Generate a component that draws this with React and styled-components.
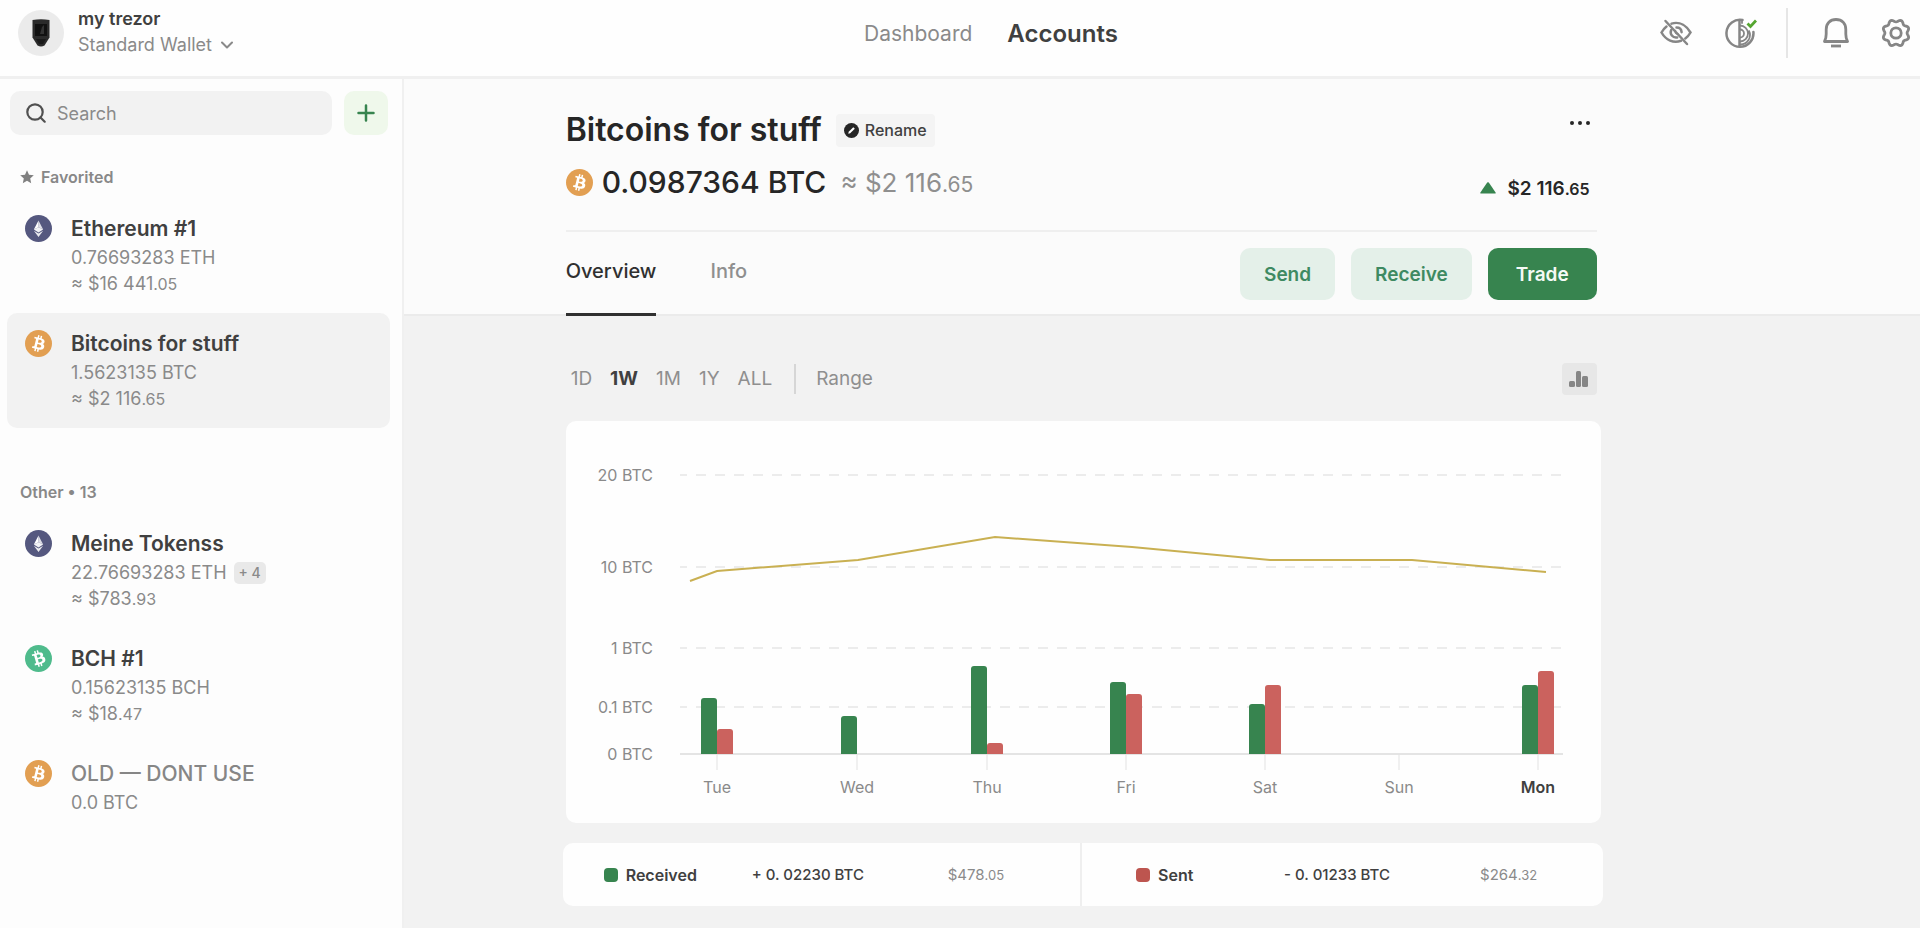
import React from "react";
import styled, { createGlobalStyle, css } from "styled-components";

const GlobalStyle = createGlobalStyle`
  * {
    box-sizing: border-box;
  }

  body {
    margin: 0;
    background: #f2f2f2;
    color: #404040;
    font-family: Inter, "Liberation Sans", sans-serif;
    font-size: 18px;
  }

  button, input {
    font: inherit;
    color: inherit;
  }

  button {
    border: 0;
    padding: 0;
    background: none;
    cursor: pointer;
  }

  svg {
    display: block;
    flex: none;
  }
`;

const Page = styled.div`
  min-height: 100vh;
  display: flex;
  flex-direction: column;
`;

/* Header */

const Header = styled.header`
  height: 79px;
  padding: 0 9px 10px 18px;
  display: grid;
  grid-template-columns: 16fr auto 15fr;
  align-items: center;
  background: #fefefe;
  border-bottom: 3px solid #f0f0f0;
`;

const WalletSwitcher = styled.button`
  display: flex;
  align-items: center;
  gap: 14px;
  text-align: left;
`;

const Avatar = styled.span`
  width: 46px;
  height: 46px;
  border-radius: 50%;
  background: #ebebeb;
  display: flex;
  align-items: center;
  justify-content: center;
`;

const WalletLabel = styled.span`
  padding-bottom: 3px;
`;

const WalletName = styled.span`
  display: block;
  font-weight: 600;
  line-height: 26px;
`;

const WalletType = styled.span`
  display: flex;
  align-items: center;
  gap: 9px;
  color: #8a8a8a;
  line-height: 26px;
`;

const Nav = styled.nav`
  display: flex;
  align-items: center;
  gap: 35px;
`;

const NavLink = styled.a`
  color: ${(props) => (props.$active ? "#404040" : "#8a8a8a")};
  font-size: ${(props) => (props.$active ? "24px" : "21px")};
  font-weight: ${(props) => (props.$active ? 600 : 400)};
  text-decoration: none;
`;

const HeaderActions = styled.div`
  display: flex;
  align-items: center;
  justify-content: flex-end;
  gap: 32px;
  color: #868686;
`;

const HeaderDivider = styled.span`
  width: 2px;
  height: 50px;
  margin: 0 3px 0 -3px;
  background: #e6e6e6;
`;

/* Sidebar */

const Body = styled.div`
  flex: 1;
  display: flex;
`;

const Sidebar = styled.aside`
  flex: none;
  width: 404px;
  padding: 12px 12px 0 7px;
  background: #fdfdfd;
  border-right: 2px solid #f0f0f0;
`;

const SearchRow = styled.div`
  display: flex;
  gap: 12px;
  padding: 0 2px 0 3px;
`;

const SearchBox = styled.label`
  flex: 1;
  min-width: 0;
  height: 44px;
  padding: 0 16px;
  display: flex;
  align-items: center;
  gap: 11px;
  border-radius: 10px;
  background: #f2f2f2;
`;

const SearchInput = styled.input`
  flex: 1;
  min-width: 0;
  padding: 0;
  border: 0;
  outline: 0;
  background: none;

  &::placeholder {
    color: #8a8a8a;
    opacity: 1;
  }
`;

const AddButton = styled.button`
  flex: none;
  width: 44px;
  height: 44px;
  border-radius: 10px;
  background: #eff8eb;
  color: #37844f;
  display: flex;
  align-items: center;
  justify-content: center;
`;

const GroupTitle = styled.h2`
  margin: 32px 0 11px;
  padding-left: 13px;
  display: flex;
  align-items: center;
  gap: 7px;
  color: #888;
  font-size: 16px;
  font-weight: 600;
  line-height: 20px;
`;

const AccountList = styled.ul`
  list-style: none;
  margin: 0 0 54px;
  padding: 0;
`;

const AccountButton = styled.button`
  width: 100%;
  min-height: 115px;
  padding: 17px 18px 15px;
  display: flex;
  align-items: flex-start;
  gap: 19px;
  border-radius: 10px;
  background: ${(props) => (props.$active ? "#f2f2f2" : "transparent")};
  text-align: left;
`;

const AccountName = styled.span`
  display: block;
  color: ${(props) => (props.$muted ? "#868686" : "#404040")};
  font-size: 21px;
  font-weight: ${(props) => (props.$muted ? 500 : 600)};
  line-height: 28px;
  margin-bottom: 2px;
`;

const AccountAmount = styled.span`
  display: flex;
  align-items: center;
  gap: 7px;
  color: #8a8a8a;
  line-height: 26px;
`;

const Badge = styled.span`
  padding: 0 5px;
  border-radius: 5px;
  background: #e9e9e9;
  font-size: 14px;
  font-weight: 500;
  line-height: 22px;
`;

const Cents = styled.span`
  font-size: ${(props) => props.$size || "16px"};
`;

/* Account page */

const Main = styled.main`
  flex: 1;
  min-width: 0;
`;

const Section = styled.section`
  display: grid;
  grid-template-columns: 1fr minmax(0, 1040px) 2fr;

  > * {
    grid-column: 2;
    min-width: 0;
  }

  ${(props) =>
    props.$raised &&
    css`
      background: #fbfbfb;
      border-bottom: 2px solid #ebebeb;
    `}
`;

const AccountHeader = styled.div`
  padding: 27px 6px 0 3px;
`;

const TitleRow = styled.div`
  height: 48px;
  display: flex;
  align-items: center;
  gap: 14px;
`;

const Title = styled.h1`
  margin: 0;
  color: #262626;
  font-size: 32px;
  font-weight: 600;
  line-height: 40px;
`;

const RenameButton = styled.button`
  height: 33px;
  padding: 0 8px;
  display: flex;
  align-items: center;
  gap: 6px;
  border-radius: 4px;
  background: #f4f4f4;
  color: #404040;
  font-size: 16px;
  font-weight: 500;
`;

const MoreButton = styled.button`
  margin-left: auto;
  padding: 6px 6px 20px;
  color: #262626;
`;

const BalanceRow = styled.div`
  height: 56px;
  display: flex;
  align-items: center;
`;

const Balance = styled.span`
  margin: 0 14px 0 9px;
  color: #262626;
  font-size: 30px;
  font-weight: 500;
`;

const BalanceFiat = styled.span`
  color: #8f8f8f;
  font-size: 26px;
`;

const Change = styled.span`
  margin-left: auto;
  padding: 12px 7px 0 0;
  display: flex;
  align-items: center;
  gap: 11px;
  color: #262626;
  font-size: 19px;
  font-weight: 600;
`;

const TabRow = styled.div`
  height: 84px;
  margin-top: 20px;
  display: flex;
  justify-content: space-between;
  border-top: 2px solid #efefef;
`;

const Tabs = styled.div`
  display: flex;
  gap: 54px;
`;

const Tab = styled.button`
  height: 84px;
  padding-bottom: 4px;
  border-bottom: 3px solid ${(props) => (props.$active ? "#303030" : "transparent")};
  color: ${(props) => (props.$active ? "#303030" : "#8f8f8f")};
  font-size: 20px;
  font-weight: 500;
`;

const Actions = styled.div`
  display: flex;
  gap: 16px;
  padding-top: 16px;
`;

const ActionButton = styled.button`
  height: 52px;
  padding: 0 ${(props) => (props.$primary ? "28px" : "24px")};
  border-radius: 10px;
  background: ${(props) => (props.$primary ? "#37844f" : "#e4f0e9")};
  color: ${(props) => (props.$primary ? "#f4faf6" : "#3e8a62")};
  font-size: 19px;
  font-weight: 600;
`;

const RangeRow = styled.div`
  height: 105px;
  padding: 20px 6px 0 8px;
  display: flex;
  align-items: center;
`;

const RangeButton = styled.button`
  margin-right: 18px;
  color: ${(props) => (props.$active ? "#404040" : "#8f8f8f")};
  font-size: 19px;
  font-weight: ${(props) => (props.$active ? 700 : 400)};
`;

const RangeDivider = styled.span`
  width: 2px;
  height: 30px;
  margin: 0 20px 0 4px;
  background: #d6d6d6;
`;

const ChartToggle = styled.button`
  width: 35px;
  height: 32px;
  margin-left: auto;
  border-radius: 4px;
  background: #e7e7e7;
  color: #868686;
  display: flex;
  align-items: center;
  justify-content: center;
`;

const ChartCard = styled.div`
  margin: 0 2px 0 3px;
  border-radius: 10px;
  background: #fefefe;
`;

const ChartSvg = styled.svg`
  width: 100%;
  height: auto;
`;

const AxisText = styled.text`
  fill: ${(props) => (props.$active ? "#404040" : "#8a8a8a")};
  font-size: 16px;
  font-weight: ${(props) => (props.$active ? 600 : 400)};
`;

const Summary = styled.div`
  margin-top: 20px;
  display: grid;
  grid-template-columns: 99fr 100fr;
  border-radius: 10px;
  background: #fefefe;
`;

const SummaryItem = styled.div`
  height: 63px;
  padding-left: ${(props) => (props.$divided ? "54px" : "41px")};
  border-left: ${(props) => (props.$divided ? "2px solid #efefef" : "0")};
  display: grid;
  grid-template-columns: 148px 196px 1fr;
  align-items: center;
  font-size: 15px;
`;

const SummaryLabel = styled.span`
  display: flex;
  align-items: center;
  gap: 8px;
  font-size: 16px;
  font-weight: 600;
`;

const Swatch = styled.span`
  width: 14px;
  height: 14px;
  border-radius: 4px;
  background: ${(props) => props.$color};
`;

const SummaryAmount = styled.span`
  font-weight: 500;
`;

const SummaryFiat = styled.span`
  color: #8a8a8a;
`;

/* Icons */

const B_PATH =
  "M23.189 14.02c.314-2.096-1.283-3.223-3.465-3.975l.708-2.84-1.728-.43-.69 2.765c-.454-.114-.92-.22-1.385-.326l.695-2.783L15.596 6l-.708 2.839c-.376-.086-.746-.17-1.104-.26l.002-.009-2.384-.595-.46 1.846s1.283.294 1.256.312c.7.175.826.638.805 1.006l-.806 3.235c.048.012.11.03.18.057l-.183-.045-1.13 4.532c-.086.212-.303.531-.793.41.018.025-1.256-.313-1.256-.313l-.858 1.978 2.25.561c.418.105.828.215 1.231.318l-.715 2.872 1.727.43.708-2.84c.472.127.93.245 1.378.357l-.706 2.828 1.728.43.715-2.866c2.948.558 5.164.333 6.097-2.333.752-2.146-.037-3.385-1.588-4.192 1.13-.26 1.98-1.003 2.207-2.538zm-3.95 5.538c-.533 2.147-4.148.986-5.32.695l.95-3.805c1.172.293 4.929.872 4.37 3.11zm.535-5.569c-.487 1.953-3.495.96-4.47.717l.86-3.45c.975.243 4.118.696 3.61 2.733z";

const COIN_COLORS = { btc: "#e29f52", eth: "#55587f", bch: "#4fbb8c" };

const CoinIcon = ({ coin }) => (
  <svg width="27" height="27" viewBox="0 0 32 32" aria-hidden="true">
    <circle cx="16" cy="16" r="16" fill={COIN_COLORS[coin]} />
    {coin === "eth" ? (
      <g fill="#fff">
        <path d="M16 6.500v8l5.500 2.700z" opacity=".8" />
        <path d="M16 6.500l-5.500 10.700 5.500-2.700z" />
        <path d="M10.500 17.200l5.500-2.700 5.500 2.700-5.500 3.400z" opacity=".92" />
        <path d="M10.500 18.600l5.500 3.400 5.500-3.400-5.500 7.600z" opacity=".88" />
      </g>
    ) : (
      <path d={B_PATH} fill="#fff" transform={coin === "bch" ? "rotate(-30 16 16)" : undefined} />
    )}
  </svg>
);

const DeviceIcon = () => (
  <svg width="18" height="28" viewBox="0 0 18 28">
    <path d="M.5 1Q9-.5 17.500 1v17.500l-5 8Q9 28.500 5.500 26.500l-5-8z" fill="#2b2b2b" />
    <path d="M3 5h12v12H3z" fill="#111" />
    <path d="M10 8l2-2v9H8z" fill="#333" />
    <path d="M4 20h10l-3 5H7z" fill="#1a1a1a" />
  </svg>
);

const ChevronIcon = () => (
  <svg width="12" height="8" viewBox="0 0 12 8" fill="none" stroke="currentColor" strokeWidth="2" strokeLinecap="round" strokeLinejoin="round">
    <path d="M1 1.500l5 5 5-5" />
  </svg>
);

const SearchIcon = () => (
  <svg width="20" height="20" viewBox="0 0 20 20" fill="none" stroke="#505050" strokeWidth="2.200" strokeLinecap="round">
    <circle cx="9" cy="9" r="7.700" />
    <path d="M14.500 14.500l4.200 4.200" />
  </svg>
);

const PlusIcon = () => (
  <svg width="18" height="18" viewBox="0 0 18 18" stroke="currentColor" strokeWidth="2.500" strokeLinecap="round">
    <path d="M9 1.500v15M1.500 9h15" />
  </svg>
);

const StarIcon = () => (
  <svg width="14" height="14" viewBox="0 0 14 14" fill="#808080">
    <path d="M7 .3l2 4.400 4.800.5-3.600 3.200 1 4.800L7 10.800l-4.200 2.400 1-4.800L.2 5.200 5 4.700z" />
  </svg>
);

const HideIcon = () => (
  <svg width="32" height="28" viewBox="0 0 32 28" fill="none" stroke="currentColor" strokeWidth="2.500" strokeLinecap="round">
    <path d="M5.500 2L27 25" />
    <path d="M11.500 4.600C20.500 2 27 7.500 30.500 13.500c-1.300 2.300-3 4.400-5.200 6" />
    <path d="M6.500 7.500C4.300 9.200 2.700 11.300 1.500 13.500 6 21.300 13.500 24.500 21 21.800" />
    <path d="M16.500 8.600c3 0 4.900 2 5.100 4.600" />
    <path d="M11.200 11c-1.700 4 1.500 8.200 6 7.400" />
    <path d="M15.500 11.500c-1 2 .5 3.600 2.500 3.500" strokeWidth="1.500" />
  </svg>
);

const ContrastIcon = () => (
  <svg width="33" height="31" viewBox="0 0 33 31" fill="none" stroke="currentColor" strokeWidth="2.500">
    <path d="M18.500 2.100A13.500 13.500 0 1 0 29.400 14" strokeLinecap="round" />
    <path d="M15.500 2v27" />
    <path d="M16 7.500a8 8 0 0 1 0 16M18 2.200v3.500M24.800 12.500a9.500 9.500 0 0 1-8.800 14" strokeWidth="1.800" />
    <path d="M16 11.500a4 4 0 0 1 0 8" strokeWidth="1.800" />
    <path d="M23.500 5.500l3 3L32 2.500" stroke="#55a630" strokeWidth="2.800" />
  </svg>
);

const BellIcon = () => (
  <svg width="26" height="30" viewBox="0 0 26 30" fill="none" stroke="currentColor" strokeWidth="2.800" strokeLinejoin="round">
    <path d="M1.500 23.500c1.200-2.300 1.700-4.500 1.700-7.500v-4.500C3.200 5.500 7 1.500 13 1.500s9.800 4 9.800 10V16c0 3 .5 5.200 1.700 7.500z" />
    <path d="M8 28h10" />
  </svg>
);

// eight soft teeth, a notch pointing straight up
const GEAR_PATH =
  Array.from({ length: 96 }, (_, i) => {
    const angle = (i / 96) * Math.PI * 2;
    const radius = 12.3 - 1.2 * Math.cos(angle * 8);
    const x = (15 + radius * Math.sin(angle)).toFixed(2);
    const y = (15 - radius * Math.cos(angle)).toFixed(2);
    return `${i ? "L" : "M"}${x} ${y}`;
  }).join("") + "Z";

const GearIcon = () => (
  <svg width="30" height="30" viewBox="0 0 30 30" fill="none" stroke="currentColor" strokeWidth="2.800">
    <path d={GEAR_PATH} />
    <circle cx="15" cy="15" r="5.200" />
  </svg>
);

const RenameIcon = () => (
  <svg width="15" height="15" viewBox="0 0 15 15">
    <circle cx="7.500" cy="7.500" r="7.500" fill="#262626" />
    <path d="M4.300 10.700l.4-1.900 4.600-4.600 1.500 1.500-4.600 4.600z" fill="#fff" />
  </svg>
);

const DotsIcon = () => (
  <svg width="22" height="6" viewBox="0 0 22 6" fill="currentColor">
    <circle cx="3" cy="3" r="2" />
    <circle cx="11" cy="3" r="2" />
    <circle cx="19" cy="3" r="2" />
  </svg>
);

const UpIcon = () => (
  <svg width="16" height="12" viewBox="0 0 16 12" fill="#37844f">
    <path d="M7.200.6q.8-.8 1.600 0l6.800 9.800q.5 1.100-.8 1.100H1.200Q-.1 11.500.4 10.400z" />
  </svg>
);

const BarsIcon = () => (
  <svg width="20" height="18" viewBox="0 0 20 18" fill="currentColor">
    <rect x="0" y="11" width="6" height="6" rx="1.500" />
    <rect x="7" y="1" width="5" height="16" rx="1.500" />
    <rect x="13" y="6" width="6" height="11" rx="1.500" />
  </svg>
);

/* Data */

const FAVORITES = [
  { coin: "eth", name: "Ethereum #1", amount: "0.76693283 ETH", fiat: ["$16 441", ".05"] },
  { coin: "btc", name: "Bitcoins for stuff", amount: "1.5623135 BTC", fiat: ["$2 116", ".65"], active: true },
];

const OTHERS = [
  { coin: "eth", name: "Meine Tokenss", amount: "22.76693283 ETH", fiat: ["$783", ".93"], badge: "+ 4" },
  { coin: "bch", name: "BCH #1", amount: "0.15623135 BCH", fiat: ["$18", ".47"] },
  { coin: "btc", name: "OLD — DONT USE", amount: "0.0 BTC", muted: true },
];

const GRID = [
  { label: "20 BTC", y: 54 },
  { label: "10 BTC", y: 146 },
  { label: "1 BTC", y: 227 },
  { label: "0.1 BTC", y: 286 },
];

const BASELINE = 333;

const DAYS = [
  { day: "Tue", x: 151, received: 56, sent: 25 },
  { day: "Wed", x: 291, received: 38, sent: 0 },
  { day: "Thu", x: 421, received: 88, sent: 11 },
  { day: "Fri", x: 560, received: 72, sent: 60 },
  { day: "Sat", x: 699, received: 50, sent: 69 },
  { day: "Sun", x: 833, received: 0, sent: 0 },
  { day: "Mon", x: 972, received: 69, sent: 83, active: true },
];

const LINE = "124,160 151,150 292,139 429,116 566,126 704,139 846,139 980,151";

const Account = ({ coin, name, amount, fiat, badge, active, muted }) => (
  <li>
    <AccountButton type="button" $active={active}>
      <CoinIcon coin={coin} />
      <span>
        <AccountName $muted={muted}>{name}</AccountName>
        <AccountAmount>
          {amount}
          {badge && <Badge>{badge}</Badge>}
        </AccountAmount>
        {fiat && (
          <AccountAmount>
            <span>
              ≈ {fiat[0]}
              <Cents>{fiat[1]}</Cents>
            </span>
          </AccountAmount>
        )}
      </span>
    </AccountButton>
  </li>
);

const barPath = (x, height) =>
  `M${x} ${BASELINE}v${3 - height}q0-3 3-3h10q3 0 3 3v${height - 3}z`;

const Chart = () => (
  <ChartSvg viewBox="0 0 1035 402" role="img" aria-label="Account balance, received and sent">
    {GRID.map(({ label, y }) => (
      <g key={label}>
        <AxisText x="87" y={y + 6} textAnchor="end">
          {label}
        </AxisText>
        <path d={`M114 ${y}H999`} stroke="#ececec" strokeWidth="2" strokeDasharray="10 9" strokeDashoffset="3" />
      </g>
    ))}
    <AxisText x="87" y={BASELINE + 6} textAnchor="end">
      0 BTC
    </AxisText>
    <path d={`M114 ${BASELINE}H997`} stroke="#e4e4e4" strokeWidth="2" />
    {DAYS.map(({ day, x, received, sent, active }) => (
      <g key={day}>
        <path d={`M${x} ${BASELINE}v16`} stroke="#e2e2e2" strokeWidth="1" />
        {received > 0 && <path d={barPath(x - 16, received)} fill="#37844f" />}
        {sent > 0 && <path d={barPath(x, sent)} fill="#cb625e" />}
        <AxisText x={x} y="372" textAnchor="middle" $active={active}>
          {day}
        </AxisText>
      </g>
    ))}
    <polyline points={LINE} fill="none" stroke="#c9b052" strokeWidth="2" />
  </ChartSvg>
);

class App extends React.Component {
  render() {
    return (
      <Page>
        <GlobalStyle />
        <Header>
          <WalletSwitcher type="button">
            <Avatar>
              <DeviceIcon />
            </Avatar>
            <WalletLabel>
              <WalletName>my trezor</WalletName>
              <WalletType>
                Standard Wallet <ChevronIcon />
              </WalletType>
            </WalletLabel>
          </WalletSwitcher>
          <Nav>
            <NavLink href="#dashboard">Dashboard</NavLink>
            <NavLink href="#accounts" $active>
              Accounts
            </NavLink>
          </Nav>
          <HeaderActions>
            <button type="button" aria-label="Hide balances">
              <HideIcon />
            </button>
            <button type="button" aria-label="Tor">
              <ContrastIcon />
            </button>
            <HeaderDivider />
            <button type="button" aria-label="Notifications">
              <BellIcon />
            </button>
            <button type="button" aria-label="Settings">
              <GearIcon />
            </button>
          </HeaderActions>
        </Header>
        <Body>
          <Sidebar>
            <SearchRow>
              <SearchBox>
                <SearchIcon />
                <SearchInput type="text" placeholder="Search" aria-label="Search" />
              </SearchBox>
              <AddButton type="button" aria-label="Add account">
                <PlusIcon />
              </AddButton>
            </SearchRow>
            <GroupTitle>
              <StarIcon /> Favorited
            </GroupTitle>
            <AccountList>
              {FAVORITES.map((account) => (
                <Account key={account.name} {...account} />
              ))}
            </AccountList>
            <GroupTitle>Other • 13</GroupTitle>
            <AccountList>
              {OTHERS.map((account) => (
                <Account key={account.name} {...account} />
              ))}
            </AccountList>
          </Sidebar>
          <Main>
            <Section $raised>
              <AccountHeader>
                <TitleRow>
                  <Title>Bitcoins for stuff</Title>
                  <RenameButton type="button">
                    <RenameIcon /> Rename
                  </RenameButton>
                  <MoreButton type="button" aria-label="More">
                    <DotsIcon />
                  </MoreButton>
                </TitleRow>
                <BalanceRow>
                  <CoinIcon coin="btc" />
                  <Balance>0.0987364 BTC</Balance>
                  <BalanceFiat>
                    ≈ $2 116<Cents $size="21px">.65</Cents>
                  </BalanceFiat>
                  <Change>
                    <UpIcon />
                    <span>
                      $2 116<Cents>.65</Cents>
                    </span>
                  </Change>
                </BalanceRow>
                <TabRow>
                  <Tabs>
                    <Tab type="button" $active>
                      Overview
                    </Tab>
                    <Tab type="button">Info</Tab>
                  </Tabs>
                  <Actions>
                    <ActionButton type="button">Send</ActionButton>
                    <ActionButton type="button">Receive</ActionButton>
                    <ActionButton type="button" $primary>
                      Trade
                    </ActionButton>
                  </Actions>
                </TabRow>
              </AccountHeader>
            </Section>
            <Section>
              <RangeRow>
                <RangeButton type="button">1D</RangeButton>
                <RangeButton type="button" $active>
                  1W
                </RangeButton>
                <RangeButton type="button">1M</RangeButton>
                <RangeButton type="button">1Y</RangeButton>
                <RangeButton type="button">ALL</RangeButton>
                <RangeDivider />
                <RangeButton type="button">Range</RangeButton>
                <ChartToggle type="button" aria-label="Chart type">
                  <BarsIcon />
                </ChartToggle>
              </RangeRow>
              <ChartCard>
                <Chart />
              </ChartCard>
              <Summary>
                <SummaryItem>
                  <SummaryLabel>
                    <Swatch $color="#37844f" /> Received
                  </SummaryLabel>
                  <SummaryAmount>+ 0. 02230 BTC</SummaryAmount>
                  <SummaryFiat>
                    $478<Cents $size="13px">.05</Cents>
                  </SummaryFiat>
                </SummaryItem>
                <SummaryItem $divided>
                  <SummaryLabel>
                    <Swatch $color="#bd554f" /> Sent
                  </SummaryLabel>
                  <SummaryAmount>- 0. 01233 BTC</SummaryAmount>
                  <SummaryFiat>
                    $264<Cents $size="13px">.32</Cents>
                  </SummaryFiat>
                </SummaryItem>
              </Summary>
            </Section>
          </Main>
        </Body>
      </Page>
    );
  }
}

export default App;
